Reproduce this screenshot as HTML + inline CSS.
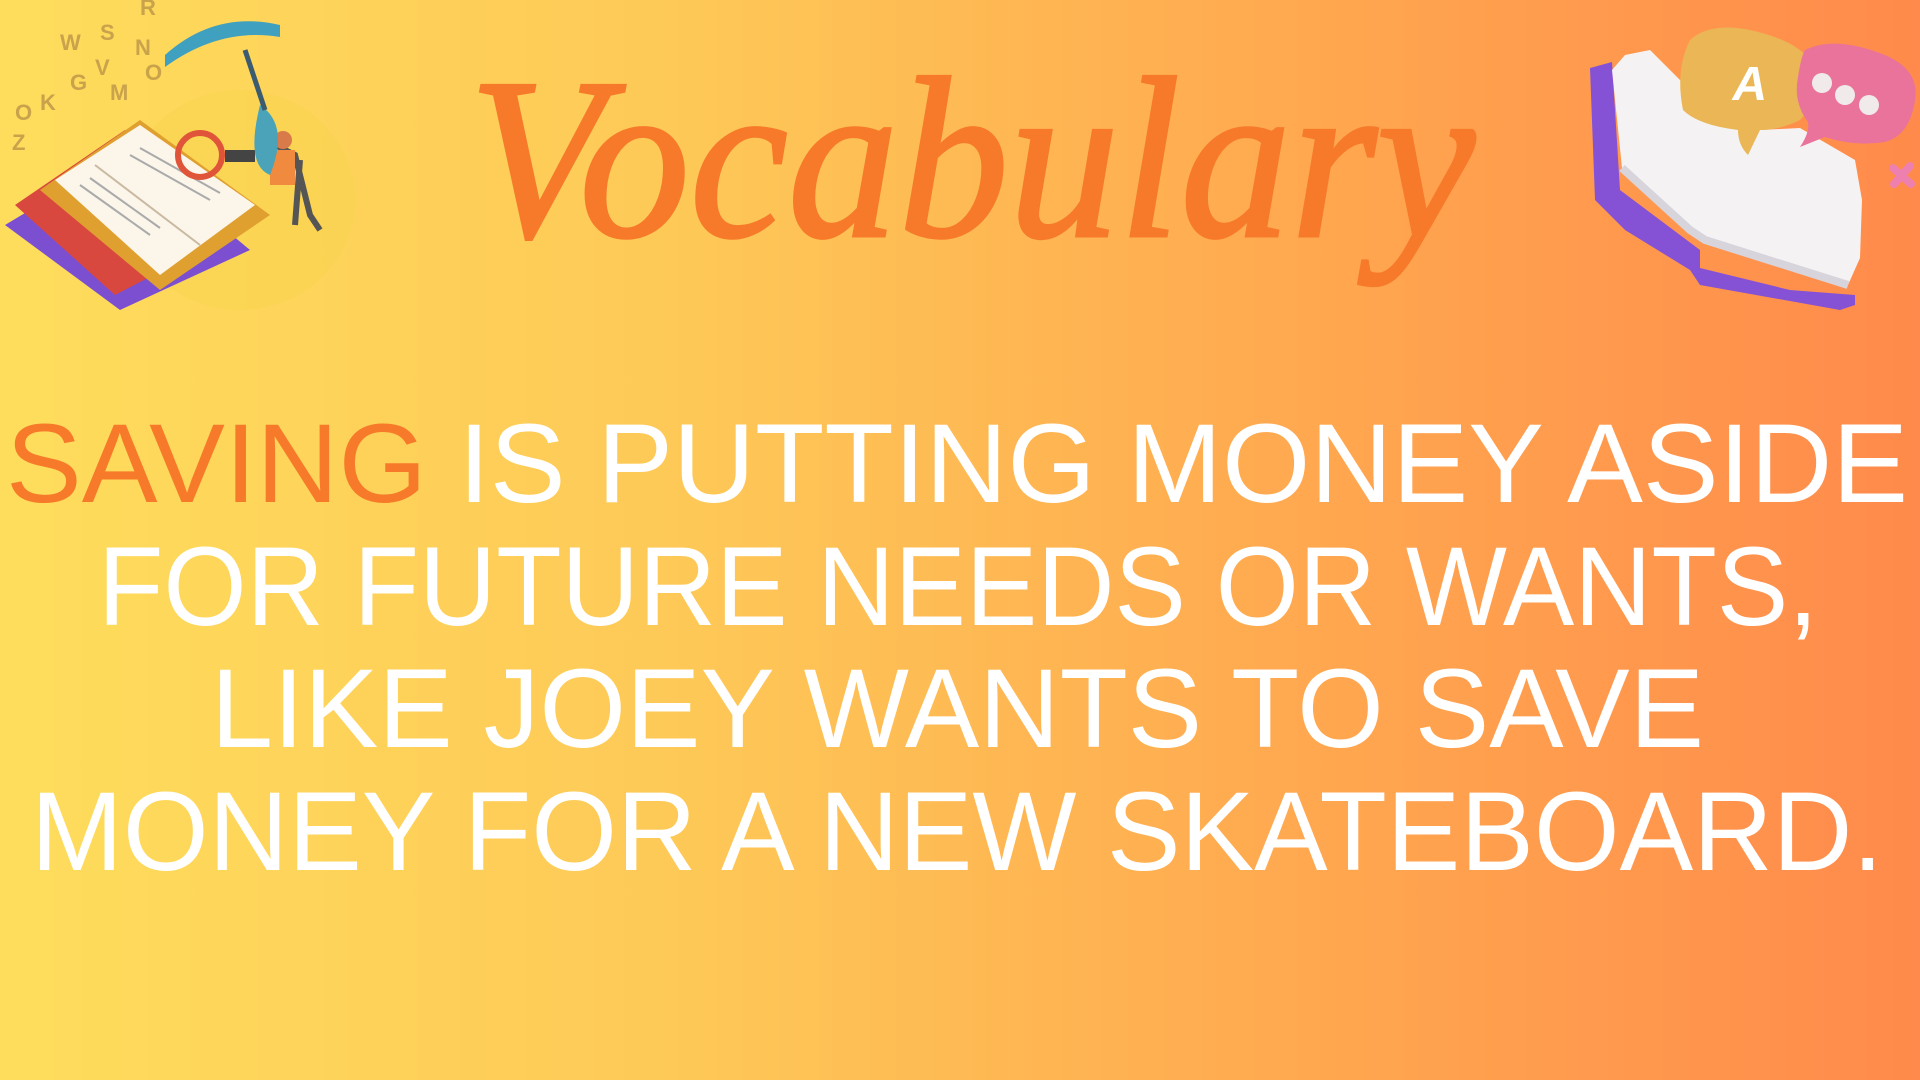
<!DOCTYPE html>
<html><head><meta charset="utf-8"><style>
html,body{margin:0;padding:0;width:1920px;height:1080px;overflow:hidden}
body{background:linear-gradient(90deg,#fedd5c 0%,#fec957 35%,#ffab50 65%,#ff8a4b 100%)}
svg{position:absolute;left:0;top:0}
</style></head><body>
<svg width="1920" height="1080" viewBox="0 0 1920 1080">
<g>
<ellipse cx="240" cy="200" rx="115" ry="110" fill="#f8d350" opacity="0.6"/>
<polygon points="5,225 130,150 250,250 120,310" fill="#7b4fd0"/>
<polygon points="15,205 125,130 240,230 115,295" fill="#d9483e"/>
<polygon points="40,190 140,120 270,215 160,290" fill="#e0a030"/>
<polygon points="55,180 140,125 255,205 160,275" fill="#fbf5ea"/>
<line x1="95" y1="165" x2="200" y2="245" stroke="#c9b9a0" stroke-width="2"/>
<g stroke="#aaa" stroke-width="2"><line x1="80" y1="185" x2="150" y2="235"/><line x1="90" y1="178" x2="160" y2="228"/><line x1="130" y1="155" x2="210" y2="200"/><line x1="140" y1="148" x2="220" y2="193"/></g>
<circle cx="200" cy="155" r="22" fill="none" stroke="#e0553a" stroke-width="6"/>
<rect x="225" y="150" width="30" height="12" fill="#444"/>
<path d="M275 145 l20 10 l15 60 l10 15 M300 160 l-5 65" stroke="#555" stroke-width="6" fill="none"/>
<circle cx="283" cy="140" r="9" fill="#d97a4a"/>
<rect x="270" y="150" width="25" height="35" fill="#f08a3e"/>
<path d="M260 105 q30 20 10 70 q-25 -10 -10 -70z" fill="#4aa3b8"/>
<path d="M245 50 l20 60" stroke="#3a5b70" stroke-width="5"/>
<path d="M165 55 q50 -45 115 -30 l0 12 q-60 -10 -115 30z" fill="#3fa0c0"/>
<g font-family="Liberation Sans,sans-serif" font-size="22" fill="#c9a24c" font-weight="bold">
<text x="60" y="50">W</text><text x="100" y="40">S</text><text x="135" y="55">N</text><text x="15" y="120">O</text><text x="70" y="90">G</text><text x="95" y="75">V</text><text x="40" y="110">K</text><text x="12" y="150">Z</text><text x="110" y="100">M</text><text x="140" y="15">R</text><text x="145" y="80">O</text></g>
</g>
<g>
<path d="M1590 68 L1612 62 L1620 190 L1700 250 L1700 268 L1790 290 L1855 295 L1855 305 L1840 310 L1700 285 L1690 270 L1625 230 L1595 200 Z" fill="#8552d6"/>
<path d="M1612 70 L1625 55 L1650 50 L1700 100 L1760 130 L1800 128 L1855 160 L1862 200 L1860 258 L1848 285 L1760 255 L1705 240 L1690 230 L1650 195 L1622 168 Z" fill="#f4f2f3"/>
<path d="M1622 168 L1690 230 L1705 240 L1848 285" stroke="#d8d4dc" stroke-width="8" fill="none"/>
<path d="M1690 40 q20 -18 60 -10 q45 10 60 30 q10 40 -10 60 q-20 10 -40 10 l-12 25 q-10 -10 -10 -25 q-40 -5 -55 -20 q-8 -40 7 -70z" fill="#ebb655"/>
<text x="1733" y="100" font-family="Liberation Sans,sans-serif" font-weight="bold" font-size="48" fill="#fff" transform="skewX(-10)" dx="15">A</text>
<path d="M1805 50 q30 -15 80 5 q35 15 30 45 q-5 35 -30 42 q-30 5 -60 -5 l-25 10 q10 -15 8 -25 q-15 -20 -10 -45 q3 -20 7 -27z" fill="#e9739a"/>
<circle cx="1822" cy="83" r="10" fill="#f0eaea"/><circle cx="1845" cy="95" r="10" fill="#f0eaea"/><circle cx="1869" cy="105" r="10" fill="#f0eaea"/>
<path d="M1893 168 l18 16 M1910 166 l-16 18" stroke="#ee80b0" stroke-width="8" stroke-linecap="round"/>
</g>
<text x="469" y="236" textLength="1006" lengthAdjust="spacingAndGlyphs" font-family="Liberation Serif,serif" font-style="italic" font-size="230" fill="#f77a2b" stroke="#f77a2b" stroke-width="3">Vocabulary</text>
<g font-family="Liberation Sans,sans-serif" font-size="112" fill="#ffffff">
<text x="6" y="502" textLength="1902" lengthAdjust="spacingAndGlyphs"><tspan fill="#f77a2b">SAVING</tspan> IS PUTTING MONEY ASIDE</text>
<text x="98" y="625" textLength="1720" lengthAdjust="spacingAndGlyphs">FOR FUTURE NEEDS OR WANTS,</text>
<text x="211" y="747" textLength="1493" lengthAdjust="spacingAndGlyphs">LIKE JOEY WANTS TO SAVE</text>
<text x="31" y="870" textLength="1852" lengthAdjust="spacingAndGlyphs">MONEY FOR A NEW SKATEBOARD.</text>
</g>
</svg>
</body></html>
